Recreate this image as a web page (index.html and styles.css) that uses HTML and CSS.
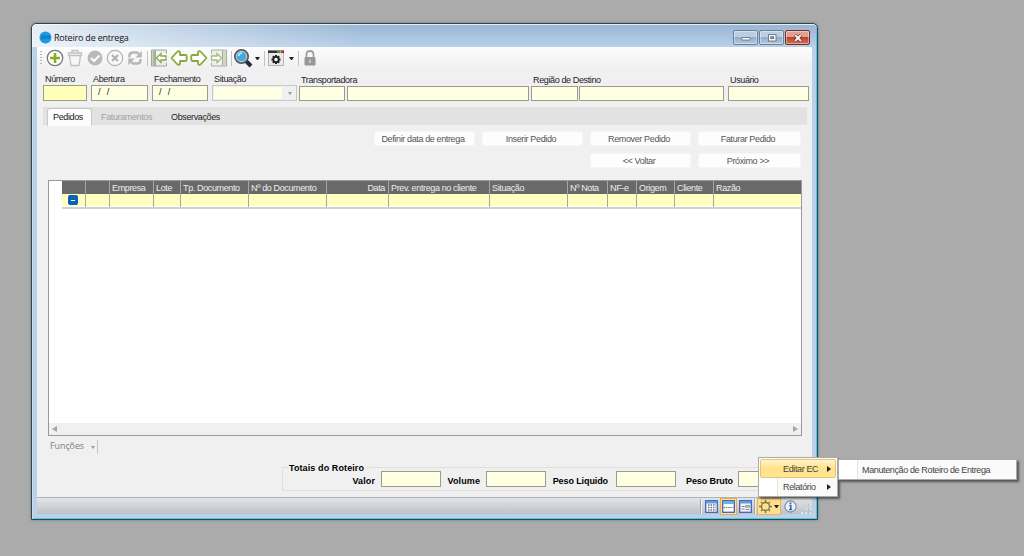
FILE: index.html
```html
<!DOCTYPE html>
<html lang="pt-BR">
<head>
    <meta charset="UTF-8">
    <meta name="viewport" content="width=device-width, initial-scale=1.0">
    <title>Roteiro de entrega</title>
    <link rel="stylesheet" href="styles.css">
</head>
<body>
    <div class="window">
        <div class="titlebar">
            <svg class="logo" width="13" height="13" viewBox="0 0 13 13"><circle cx="6.5" cy="6.5" r="6" fill="#1b9be0"/><path d="M2.500 5h2M2.500 6.500h2M2.500 8h2M5.500 8V5h1.500v3M8 5h2.500v3M9 8V5" fill="none" stroke="#1267ab" stroke-width=".8"/></svg>
            <span class="title">Roteiro de entrega</span>
            <div class="win-btn"><svg width="10" height="8" viewBox="0 0 10 8"><rect x="1" y="3.500" width="8" height="2.500" rx=".5" fill="#fff" stroke="#5a6472" stroke-width=".8"/></svg></div>
            <div class="win-btn"><svg width="10" height="8" viewBox="0 0 10 8"><rect x="1.500" y=".7" width="7.500" height="6.300" fill="#fff" stroke="#5a6472" stroke-width=".8"/><rect x="3.700" y="2.700" width="3" height="2" fill="#8ba6c4" stroke="#5a6472" stroke-width=".8"/></svg></div>
            <div class="win-btn close"><svg width="10" height="8" viewBox="0 0 10 8"><path d="M2 1l6 6M8 1L2 7" stroke="#6b3b3b" stroke-width="3.200"/><path d="M2.200 1.200l5.600 5.600M7.800 1.200L2.200 6.800" stroke="#fff" stroke-width="1.900"/></svg></div>
        </div>

        <div class="client">
            <div class="toolbar">
                <span class="grip"></span>
                <!-- novo -->
                <svg class="icon" viewBox="0 0 20 20"><circle cx="10" cy="10" r="7.700" fill="#fff" stroke="#777" stroke-width="1.300"/><path d="M10 5v10M5 10h10" stroke="#84b022" stroke-width="2.600"/></svg>
                <!-- excluir -->
                <svg class="icon" viewBox="0 0 20 20"><path d="M3.500 7.500V5h13v2.500zM7 5V2.500h6V5M4.500 7.500l1.500 10h8l1.500-10" fill="#f7f7f7" stroke="#c0c0c0" stroke-width="1.300"/></svg>
                <!-- confirmar -->
                <svg class="icon" viewBox="0 0 20 20"><circle cx="10" cy="10" r="7.500" fill="#b9b9b9"/><path d="M6 10l3 3 5.500-5.500" fill="none" stroke="#fff" stroke-width="2"/></svg>
                <!-- cancelar -->
                <svg class="icon" viewBox="0 0 20 20"><circle cx="10" cy="10" r="7.700" fill="#f8f8f8" stroke="#b2b2b2" stroke-width="1.200"/><path d="M7 7l6 6M13 7l-6 6" stroke="#b2b2b2" stroke-width="2.200"/></svg>
                <!-- atualizar -->
                <svg class="icon" viewBox="0 0 20 20"><path d="M4.500 9.500V7.500Q4.500 4.500 8 4.500h4l2.500 2M15.500 11v1.500q0 3-3.500 3H8l-2.500-2" fill="none" stroke="#b8b8b8" stroke-width="2.500"/><path d="M16.800 3v6.500h-6.500zM3.200 17v-6.500h6.500z" fill="#b8b8b8"/></svg>
                <span class="sep"></span>
                <!-- primeiro -->
                <svg class="icon first" viewBox="0 0 20 20"><path d="M2.500 2h15v3.500M2.500 2v16h15v-3.500M6.500 2v16" fill="#ececec" stroke="#a0a69b"/><rect x="3.500" y="2.500" width="2.500" height="15" fill="#a9b89c"/><path d="M7.500 10l4.500-4.500V8h5v4h-5v2.500z" fill="#fff" stroke="#88a846" stroke-width="1.300"/></svg>
                <svg class="icon" viewBox="0 0 20 20"><path class="arrow" d="M2.500 10l6-6.500q2.500-.8 2.500 1V7h5.500q1.200 0 1.200 1.200v3.600q0 1.200-1.200 1.200H11v2.500q0 1.800-2.500 1z"/></svg>
                <svg class="icon" viewBox="0 0 20 20"><path class="arrow" d="M17.500 10l-6-6.500Q9 2.700 9 4.500V7H3.500Q2.300 7 2.300 8.200v3.600Q2.300 13 3.500 13H9v2.500q0 1.800 2.500 1z"/></svg>
                <!-- ultimo -->
                <svg class="icon" viewBox="0 0 20 20"><path d="M2.500 5.500V2h15v16h-15v-3.500M13.500 2v16" fill="#eee" stroke="#a9ada5"/><rect x="14" y="2.500" width="3" height="15" fill="#cdd8c0"/><path d="M12.500 10L8 5.500V8H2.500v4H8v2.500z" fill="#fff" stroke="#a5bb77" stroke-width="1.300"/></svg>
                <span class="sep"></span>
                <!-- pesquisar -->
                <svg class="icon search" viewBox="0 0 20 20"><path d="M13 13l5 5" stroke="#252a40" stroke-width="4"/><circle cx="8.500" cy="8.500" r="6.600" fill="#4aa9dc" stroke="#555" stroke-width="1.800"/><circle cx="8.500" cy="8.500" r="5.300" fill="none" stroke="#ccd5da"/><path d="M5.500 8q.5-3 3.500-3" fill="none" stroke="#c5ebff" stroke-width="1.500"/></svg>
                <i class="caret"></i>
                <span class="sep wide"></span>
                <!-- configurar -->
                <svg class="icon config" viewBox="0 0 20 20"><rect x="2.500" y="3" width="15" height="14.500" fill="#e9e9e9" stroke="#b5b5b5"/><path d="M2 2.500h16V5H2z" fill="#333"/><path d="M11 2.700h2v2h-2z" fill="#4caf50"/><path d="M13.500 2.700h2v2h-2z" fill="#f3b230"/><path d="M15.500 2.700h2v2h-2z" fill="#e23b2e"/><path d="M10 7v9M5.500 11.500h9M6.800 8.300l6.400 6.400M13.200 8.300l-6.400 6.400" stroke="#222" stroke-width="2"/><circle cx="10" cy="11.500" r="3.500" fill="#222"/><circle cx="10" cy="11.500" r="1.700" fill="#fff"/></svg>
                <i class="caret"></i>
                <span class="sep wide"></span>
                <!-- bloquear -->
                <svg class="icon lock" viewBox="0 0 20 20"><path d="M6.500 9V6.500q0-3.500 3.500-3.500t3.500 3.500V9" fill="none" stroke="#a0a0a0" stroke-width="1.800"/><rect x="4.500" y="9" width="11" height="8.500" rx="1" fill="#979797"/><path d="M10 11.500v3.500" stroke="#ddd" stroke-width="1.300"/></svg>
            </div>

            <div class="fields">
                <div class="field"><label>Número</label><div class="input current"></div></div>
                <div class="field"><label>Abertura</label><div class="input date">/&nbsp; /</div></div>
                <div class="field"><label>Fechamento</label><div class="input date">/&nbsp; /</div></div>
                <div class="field"><label>Situação</label><div class="input combo"><i class="caret"></i></div></div>
                <div class="field low"><label>Transportadora</label><div class="input"></div></div>
                <div class="field low"><label></label><div class="input"></div></div>
                <div class="field low"><label>Região de Destino</label><div class="input"></div></div>
                <div class="field low"><label></label><div class="input"></div></div>
                <div class="field low"><label>Usuário</label><div class="input"></div></div>
            </div>

            <div class="tabs">
                <div class="tab active">Pedidos</div>
                <div class="tab disabled">Faturamentos</div>
                <div class="tab">Observações</div>
            </div>

            <div class="actions">
                <div class="btn">Definir data de entrega</div>
                <div class="btn">Inserir Pedido</div>
                <div class="btn">Remover Pedido</div>
                <div class="btn">Faturar Pedido</div>
                <div class="btn back">&lt;&lt; Voltar</div>
                <div class="btn">Próximo &gt;&gt;</div>
            </div>

            <div class="grid">
                <div class="grid-row head">
                    <span></span><span></span><span>Empresa</span><span>Lote</span><span>Tp. Documento</span><span>Nº do Documento</span><span class="right">Data</span><span>Prev. entrega no cliente</span><span>Situação</span><span>Nº Nota</span><span>NF-e</span><span>Origem</span><span>Cliente</span><span>Razão</span>
                </div>
                <div class="grid-row filter">
                    <span><b class="minus"></b></span><span></span><span></span><span></span><span></span><span></span><span></span><span></span><span></span><span></span><span></span><span></span><span></span><span></span>
                </div>
                <div class="scrollbar"><i class="left"></i><i class="rightarrow"></i></div>
            </div>

            <div class="functions"><span>Funções</span><i class="caret"></i></div>

            <div class="totals">
                <div class="legend">Totais do Roteiro</div>
                <span class="valor">Valor</span><div class="input"></div>
                <span class="volume">Volume</span><div class="input"></div>
                <span class="liquido">Peso Liquido</span><div class="input"></div>
                <span class="bruto">Peso Bruto</span><div class="input"></div>
            </div>

            <div class="statusbar">
                <span class="sep"></span>
                <div class="status-btn"><svg width="13" height="13" viewBox="0 0 13 13"><rect x=".7" y=".7" width="11.600" height="11.600" fill="#fff" stroke="#4361bd" stroke-width="1.300"/><path d="M1 1h11v2.500H1z" fill="#55a3dc"/><path d="M3 5h8M3 7.500h8M3 10h8" stroke="#697085" stroke-width="1.400" stroke-dasharray="1.500 1"/></svg></div>
                <div class="status-btn on"><svg width="13" height="13" viewBox="0 0 13 13"><rect x=".7" y=".7" width="11.600" height="11.600" fill="#fff" stroke="#4361bd" stroke-width="1.300"/><path d="M1 1h11v3H1z" fill="#67b4e4"/><path d="M1.500 7.500h10" stroke="#697085" stroke-dasharray="1.500 .8"/></svg></div>
                <div class="status-btn"><svg width="13" height="13" viewBox="0 0 13 13"><rect x=".7" y=".7" width="11.600" height="11.600" fill="#f4f4f4" stroke="#4361bd" stroke-width="1.300"/><path d="M1 1h11v2.500H1z" fill="#55a3dc"/><path d="M2.500 6.500h3M2.500 9h3M6.500 5.700h4v1.500h-4zM6.500 9.500h4" fill="none" stroke="#8a8a92"/></svg></div>
                <span class="sep"></span>
                <div class="gear">
                    <svg width="15" height="15" viewBox="0 0 15 15"><path d="M7.500 1v13M1 7.500h13M3 3l9 9M12 3l-9 9" stroke="#7b7550" stroke-width="1.400"/><circle cx="7.500" cy="7.500" r="4" fill="#ffe08d" stroke="#7b7550" stroke-width="1.300"/></svg>
                    <i class="caret"></i>
                </div>
                <svg class="info" width="13" height="13" viewBox="0 0 13 13"><circle cx="6.500" cy="6.500" r="5.600" fill="#eef2f6" stroke="#7c8794" stroke-width="1.100"/><path d="M5.300 5.500h1.500V9.500M5 9.600h3.200" fill="none" stroke="#2e69b8" stroke-width="1.500"/><circle cx="6.500" cy="3.300" r="1" fill="#2e69b8"/></svg>
                <svg class="resize" width="10" height="10" viewBox="0 0 10 10"><path d="M8 0h2v2H8zM8 4h2v2H8zM4 4h2v2H4zM8 8h2v2H8zM4 8h2v2H4zM0 8h2v2H0z" fill="#e8eaec"/><path d="M7 0h2v2H7zM7 4h2v2H7zM4 4h1v2H4zM7 7h2v2H7zM4 8h1v1H4z" fill="#a9afb6" opacity=".5"/></svg>
            </div>
        </div>
    </div>

    <div class="menu">
        <div class="menu-item selected"><span>Editar EC</span><i></i></div>
        <div class="menu-item"><span>Relatório</span><i></i></div>
    </div>
    <div class="menu submenu">
        <div class="menu-item"><span>Manutenção de Roteiro de Entrega</span></div>
    </div>
</body>
</html>
```

FILE: styles.css
```css
* {
    box-sizing: border-box;
}
body {
    margin: 0;
    height: 556px;
    overflow: hidden;
    position: relative;
    background: #ababab;
    font-family: "Liberation Sans", Arial, sans-serif;
    font-size: 9px;
    letter-spacing: -0.37px;
    color: #222;
    white-space: nowrap;
}
svg {
    display: block;
    flex: none;
}
.window {
    width: 787px;
    height: 497px;
    margin: 23px 0 0 31px;
    padding: 0 4px 4px;
    border: 1px solid #2c4650;
    border-radius: 5px 5px 0 0;
    background: linear-gradient(#9ab5d2, #b9d1ea 24px, #b9d1ea);
    box-shadow: inset 0 1px #e4eef7, inset 1px 0 #cbdcea, inset -1px 0 #48cbea, inset 0 -1px #48cbea, 0 0 3px #777;
    display: inline-block;
}
.titlebar {
    height: 23px;
    margin: 0 -4px;
    padding: 6px 7px 0;
    display: flex;
    align-items: flex-start;
    border-radius: 5px 5px 0 0;
    background: linear-gradient(90deg, rgba(255,255,255,.75), rgba(255,255,255,.45) 120px, rgba(255,255,255,0) 330px);
}
.logo {
    margin-top: 1px;
}
.title {
    flex: 1;
    margin-left: 2px;
    font: 9px/16px "Open Sans", sans-serif;
    letter-spacing: -0.2px;
    color: #111;
}
.win-btn {
    width: 25px;
    height: 15px;
    margin: 0 0 0 1px;
    border: 1px solid #66809d;
    border-radius: 2px;
    background: linear-gradient(#bccfe2 48%, #93aeca 50%, #b1c8df);
    box-shadow: inset 0 0 0 1px rgba(255,255,255,.4);
    display: flex;
    align-items: center;
    justify-content: center;
}
.close {
    border-color: #70302c;
    background: linear-gradient(#e3a090 48%, #c04230 50%, #cf7053);
}
.client {
    height: 467px;
    margin: 0 1px;
    background: #f0f0f0;
    display: flex;
    flex-direction: column;
}
.toolbar {
    height: 22px;
    margin-bottom: 1px;
    padding: 0 2px;
    display: flex;
    align-items: center;
    background: linear-gradient(#fdfdfd, #f0f0f0);
}
.grip {
    width: 2px;
    height: 14px;
    margin: 0 2.5px 0 1px;
    background: repeating-linear-gradient(#b5b5b5 0 1px, transparent 1px 3px);
}
.icon {
    width: 20px;
    height: 20px;
}
.arrow {
    fill: #fff;
    stroke: #86a93a;
    stroke-width: 1.8;
    stroke-linejoin: round;
}
.sep {
    width: 1px;
    height: 15px;
    margin: 0 1px 0 2px;
    background: #c3c3c3;
}
.wide {
    margin-left: 4px;
}
.caret {
    width: 5px;
    border: 2.5px solid transparent;
    border-top: 3px solid #222;
    border-bottom: 0;
    flex: none;
}
.toolbar .caret {
    margin-left: 2.5px;
}
.fields {
    height: 37px;
    padding: 3px 0 0 6px;
    display: grid;
    grid-template-columns: 44px 57px 56px 85px 46px 182px 47px 145px 81px;
    column-gap: 4px;
}
.field:nth-child(n+5) {
    margin-left: -2px;
    margin-right: 2px;
}
.field:nth-child(n+6) {
    margin-left: -4px;
    margin-right: 4px;
}
.field:nth-child(n+7) {
    margin-left: -6px;
    margin-right: 6px;
}
.field:nth-child(n+8) {
    margin-left: -9px;
    margin-right: 9px;
}
.field label {
    display: block;
    height: 12px;
    line-height: 12px;
    padding-left: 2px;
}
.low label {
    height: 13px;
    line-height: 14px;
}
.input {
    height: 16px;
    border: 1px solid #9b9b90;
    background: #ffffe1;
    line-height: 14px;
}
.low .input {
    height: 15px;
}
.date {
    padding-left: 6px;
    letter-spacing: 0.4px;
    line-height: 13px;
}
.current {
    background: #ffffb9;
}
.combo {
    border: 1px solid #c8c8c8;
    background: linear-gradient(#ffffe1, #ffffe1) 1px 1px / 68px 12px no-repeat #f0f0f0;
    display: flex;
    align-items: center;
    justify-content: flex-end;
    padding-right: 4px;
}
.combo .caret {
    border-width: 3px 2px 0;
    width: 4px;
    border-top-color: #9a9a9a;
}
.tabs {
    height: 18px;
    margin: 0 5px 0 6px;
    padding-left: 4px;
    background: #e2e2e2;
    display: flex;
    line-height: 20px;
}
.tab {
    height: 18px;
}
.active {
    width: 45px;
    padding-left: 5px;
    background: #fcfcfc;
    border: 1px solid #c9c9c9;
    border-bottom: 0;
    border-radius: 3px 3px 0 0;
    line-height: 16px;
    margin-top: 1px;
}
.disabled {
    margin-left: 9px;
    width: 70px;
    color: #a2a2a2;
}
.actions {
    height: 55px;
    padding: 6px 11px 0 0;
    display: grid;
    grid-template-columns: 101px 101px 101px 103px;
    grid-template-rows: 15px 15px;
    gap: 7px;
    justify-content: end;
}
.btn {
    background: #fdfdfd;
    border: 1px solid #f6f6f6;
    border-radius: 2px;
    padding-right: 3px;
    text-align: center;
    line-height: 15px;
    color: #555;
}
.back {
    grid-column: 3;
}
.grid {
    width: 754px;
    height: 256px;
    margin-left: 11px;
    border: 1px solid #999;
    background: #fff;
    display: flex;
    flex-direction: column;
}
.grid-row {
    height: 13px;
    margin-left: 13px;
    display: grid;
    grid-template-columns: 24px 24px 44px 27px 68px 78px 62px 101px 78px 40px 29px 38px 39px 1fr;
    line-height: 14px;
    flex: none;
}
.grid-row span {
    border-right: 1px solid #a7a7a0;
    padding-left: 2px;
    overflow: hidden;
}
.grid-row span:last-child {
    border-right: 0;
}
.head {
    background: #696969;
    color: #eee;
}
.grid-row .right {
    text-align: right;
    padding-right: 3px;
}
.filter {
    height: 15px;
    background: #ffffc0;
    border-bottom: 2px solid #cfcfcf;
    box-shadow: inset 0 -1px #fff;
}
.minus {
    display: block;
    width: 10px;
    height: 10px;
    margin: 1px 0 0 4px;
    border-radius: 2px;
    background: linear-gradient(#fff, #fff) center / 4px 1px no-repeat #0863b8;
}
.scrollbar {
    height: 12px;
    margin-top: auto;
    padding: 0 3px;
    background: #f0f0f0;
    display: flex;
    align-items: center;
    justify-content: space-between;
}
.left,
.rightarrow {
    border: 3px solid transparent;
    border-left-width: 0;
    border-right: 5px solid #a5a5a5;
}
.rightarrow {
    transform: scaleX(-1);
}
.functions {
    width: 50px;
    height: 14px;
    margin: 4px 0 0 11px;
    padding-left: 2px;
    border-right: 1px solid #c5c5c5;
    display: flex;
    align-items: center;
    font: 9px/12px "Open Sans", sans-serif;
    letter-spacing: -0.1px;
    color: #808080;
}
.functions span {
    margin-top: -2px;
}
.functions .caret {
    width: 4px;
    margin-left: auto;
    margin-right: 2px;
    border-width: 3px 2px 0;
    border-top-color: #999;
}
.totals {
    position: relative;
    width: 520px;
    height: 24px;
    margin: 13px 0 0 245px;
    border: 1px solid #dfdfdf;
    display: flex;
    align-items: center;
    font-weight: bold;
    letter-spacing: 0.1px;
    color: #000;
}
.totals .input {
    width: 60px;
    height: 16px;
    flex: none;
}
.totals > span {
    flex: none;
    padding-top: 3px;
    padding-right: 6px;
    text-align: right;
}
.legend {
    position: absolute;
    top: -6px;
    left: 5px;
    padding: 0 2px 0 1px;
    background: #f0f0f0;
    line-height: 12px;
}
.valor {
    width: 98px;
}
.volume {
    width: 45px;
}
.totals > .liquido {
    width: 70px;
    padding-right: 8px;
    letter-spacing: -0.1px;
}
.totals > .bruto {
    width: 62px;
    padding-right: 5px;
    letter-spacing: -0.1px;
}
.statusbar {
    height: 17px;
    margin-top: auto;
    padding-right: 1px;
    border-top: 1px solid #aeb3b9;
    background: linear-gradient(#e2e5e8, #bdc2c7);
    display: flex;
    align-items: center;
    justify-content: flex-end;
}
.statusbar .sep {
    margin: 0 1px 0 0;
    background: #f1f3f5;
    border-left: 1px solid #9da5ae;
    width: 2px;
}
.status-btn {
    width: 17px;
    height: 17px;
    display: flex;
    align-items: center;
    justify-content: center;
}
.on {
    background: #ffe19a;
    border: 1px solid #e6ae4b;
}
.gear {
    width: 24px;
    height: 17px;
    margin-right: 3px;
    background: #ffe08d;
    border: 1px solid #e8b453;
    display: flex;
    align-items: center;
    justify-content: space-between;
    padding-right: 1px;
}
.info {
    margin-right: 4px;
}
.resize {
    margin-top: 6px;
}
.menu {
    position: absolute;
    left: 758px;
    top: 457px;
    width: 80px;
    height: 40px;
    padding: 1px;
    border: 1px solid #aaa;
    background: linear-gradient(90deg, #fff 18px, #e2e2e2 18px 19px, #fafafa 19px);
    box-shadow: 2px 2px 2px rgba(0,0,0,.5);
    color: #444;
}
.submenu {
    left: 838px;
    top: 459px;
    width: 179px;
    height: 21px;
}
.menu-item {
    height: 18px;
    line-height: 20px;
    padding: 0 5px 0 23px;
    display: flex;
    align-items: center;
}
.menu-item i {
    margin-left: auto;
    border: 3px solid transparent;
    border-left: 4px solid #222;
    border-right: 0;
}
.selected {
    height: 19px;
    background: linear-gradient(#fff4d0, #ffe289 48%, #ffe596);
    border: 1px solid #eac468;
    border-radius: 2px;
    padding: 0 4px 0 22px;
}
.submenu .menu-item {
    padding-left: 22px;
}
```
